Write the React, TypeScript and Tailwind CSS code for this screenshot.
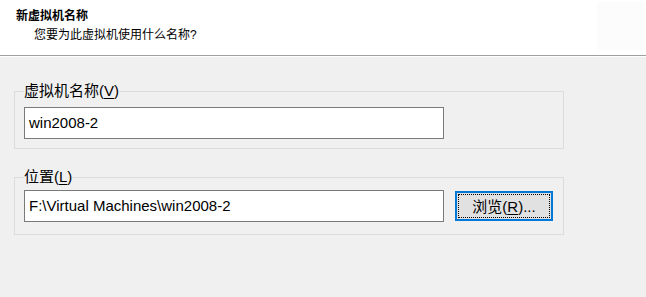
const FONT = "font-['Liberation_Sans','Noto_Sans_CJK_SC',sans-serif]";

function Mnemonic({ text, hotkey }: { text: string; hotkey: string }) {
  return (
    <>
      {text}(<span className="underline underline-offset-2">{hotkey}</span>)
    </>
  );
}

export default function App() {
  return (
    <div className={`w-[646px] h-[297px] bg-[#f0f0f0] text-black ${FONT} overflow-hidden`}>
      {/* Header */}
      <div className="relative h-[55px] bg-white pt-[8px] pl-4">
        <div className="text-[12px] leading-[16px] font-bold">新虚拟机名称</div>
        <div className="text-[12px] leading-[16px] mt-[3px] pl-[18px]">您要为此虚拟机使用什么名称?</div>
        <div className="absolute right-0 top-[2px] w-[49px] h-[48px] bg-[#fcfcfc]" />
      </div>
      <div className="h-px bg-[#a0a0a0]" />
      <div className="h-px bg-white" />

      {/* Body */}
      <div className="px-[14px] pt-[25px]">
        <fieldset className="w-[550px] border border-[#dcdcdc] pl-[9px] pr-[9px] pb-[9px]">
          <legend className="text-[15px] leading-[18px] px-0">
            <Mnemonic text="虚拟机名称" hotkey="V" />
          </legend>
          <div className="mt-[7px] w-[420px] h-[32px] border border-[#7a7a7a] bg-white pl-1 text-[15px] leading-[29px]">
            win2008-2
          </div>
        </fieldset>

        <fieldset className="mt-[19px] w-[550px] border border-[#dcdcdc] pl-[9px] pr-[9px] pb-[12px]">
          <legend className="text-[15px] leading-[18px] px-0">
            <Mnemonic text="位置" hotkey="L" />
          </legend>
          <div className="mt-[4px] flex items-start gap-[11px]">
            <div className="w-[420px] h-[32px] border border-[#7a7a7a] bg-white pl-1 text-[15px] leading-[29px]">
              F:\Virtual Machines\win2008-2
            </div>
            <button className="mt-px w-[98px] h-[30px] border-2 border-[#0078d7] bg-[#e1e1e1] p-px">
              <div className="h-full w-full border border-dotted border-black flex items-center justify-center text-[15px] leading-none">
                浏览(<span className="underline underline-offset-2">R</span>)...
              </div>
            </button>
          </div>
        </fieldset>
      </div>
    </div>
  );
}
